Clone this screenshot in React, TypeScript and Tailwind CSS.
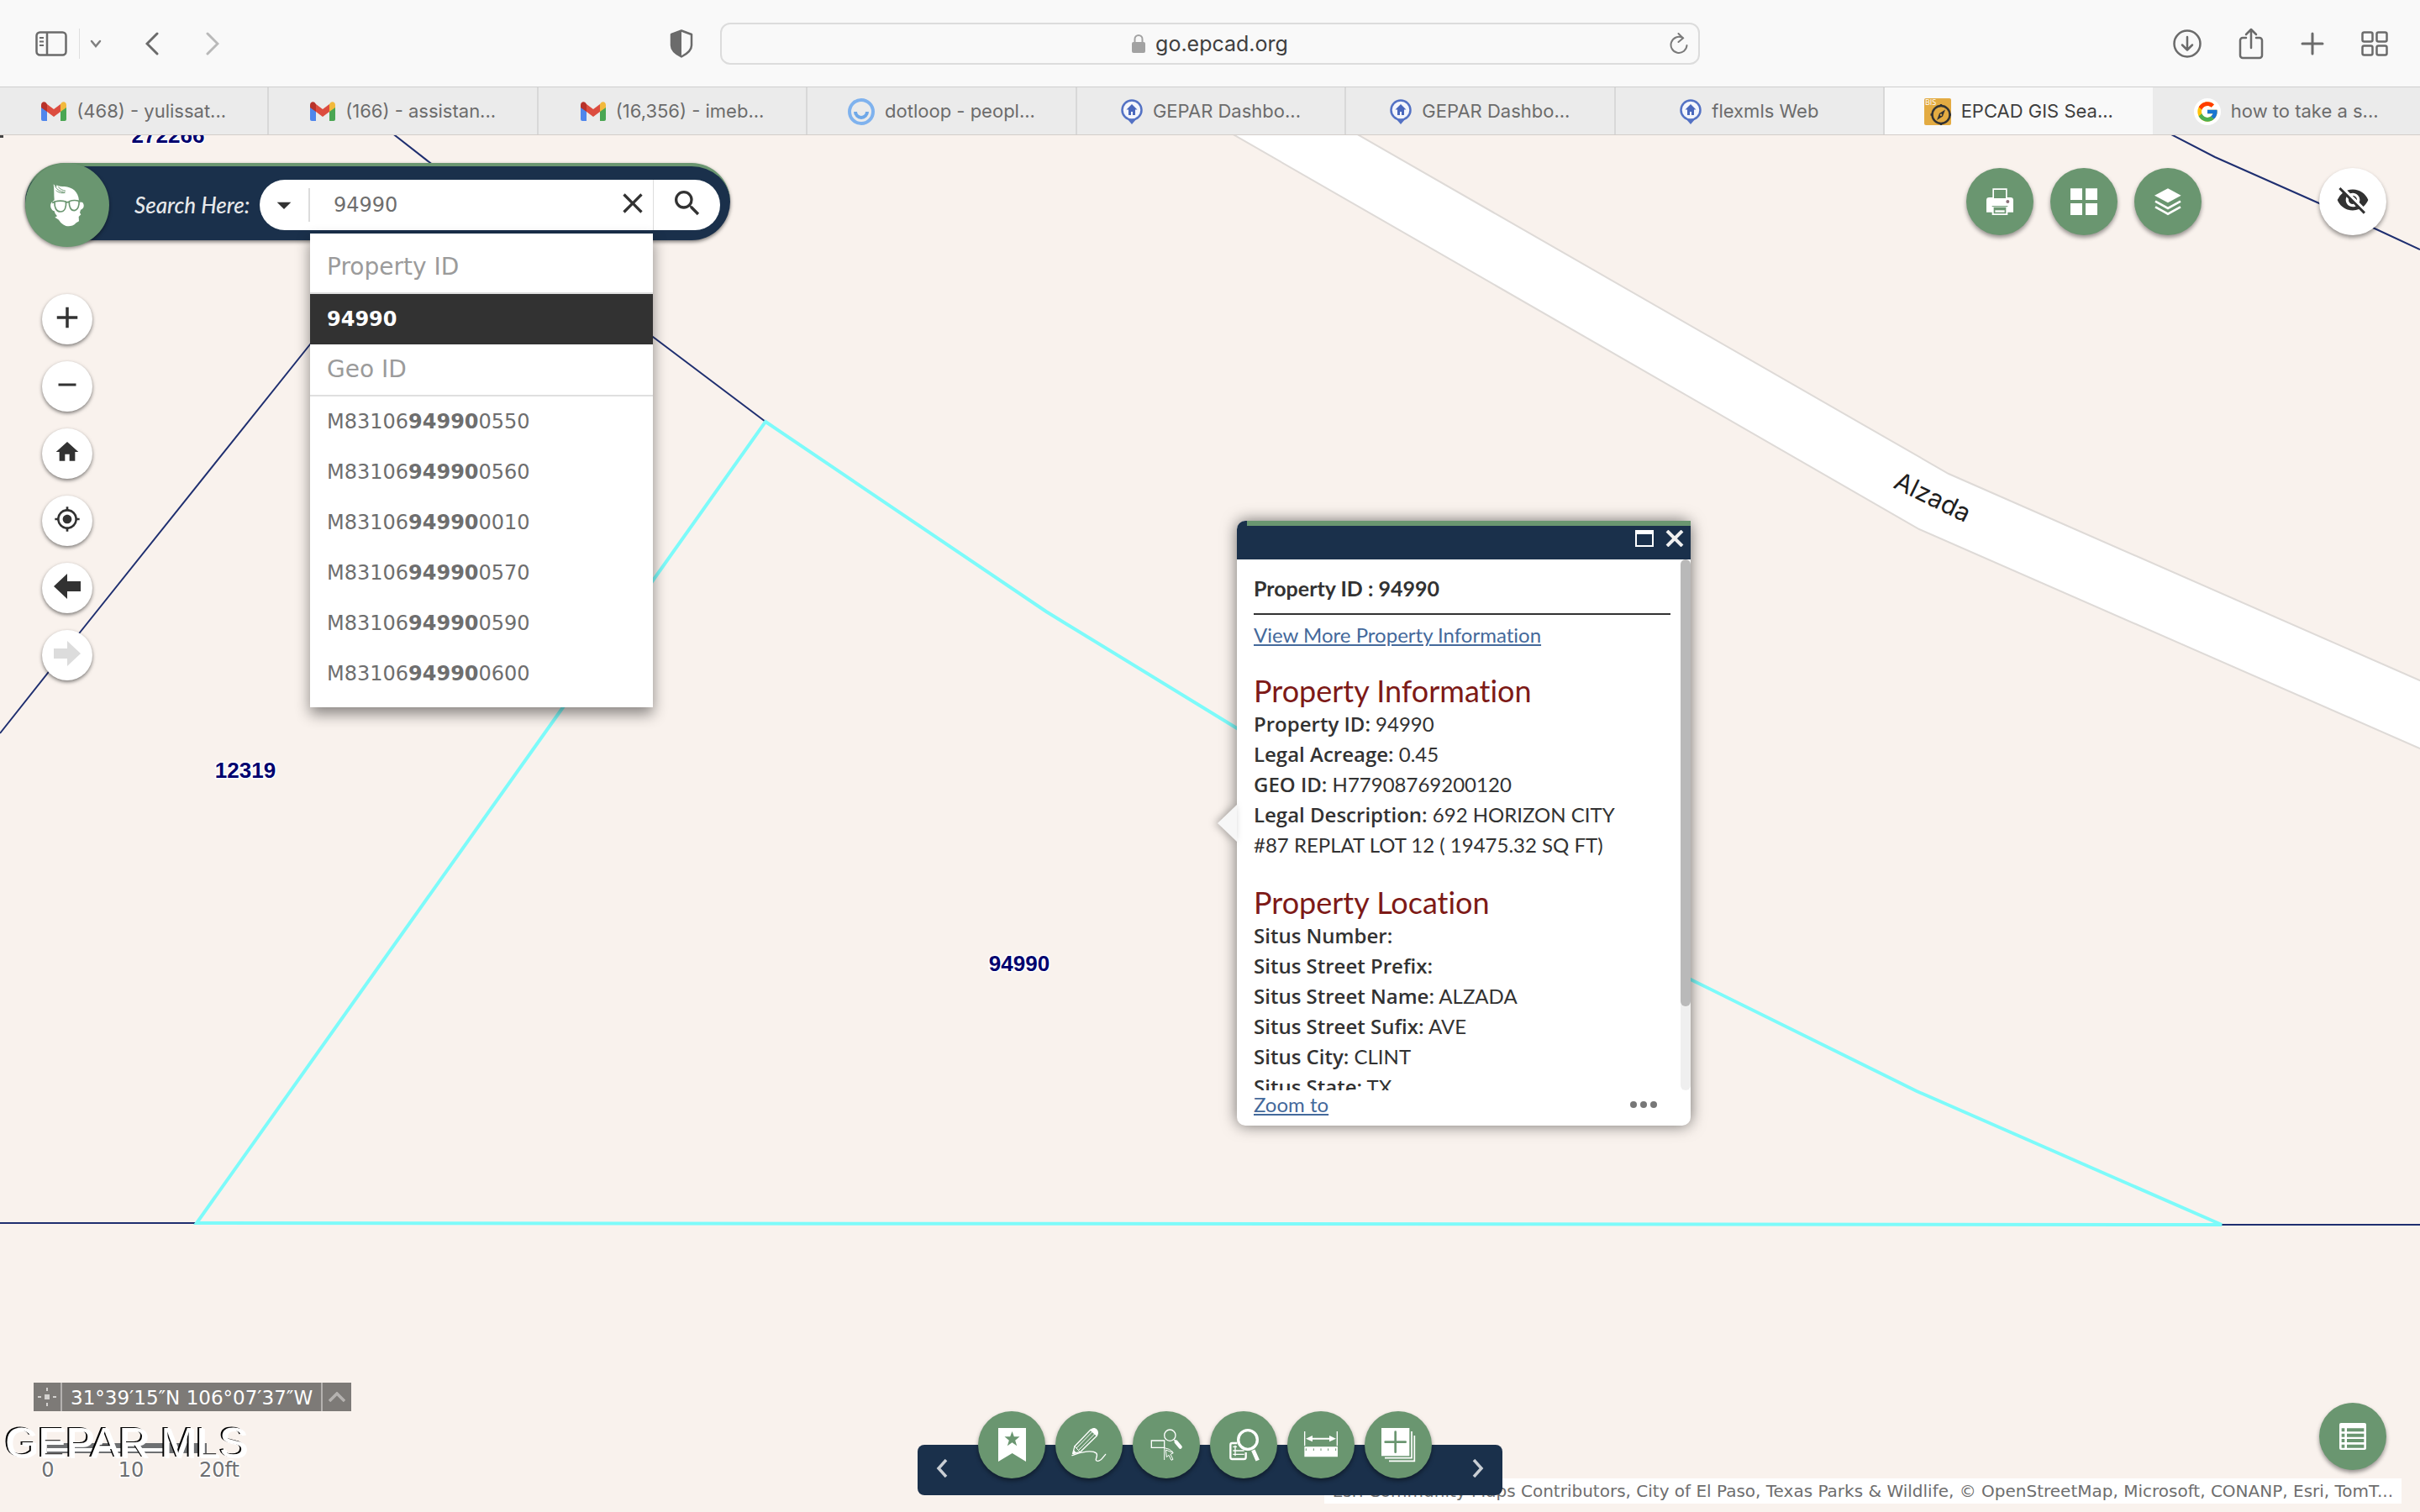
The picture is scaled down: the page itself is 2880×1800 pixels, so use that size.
import { useState, type ReactNode } from "react";
import { FcGoogle } from "react-icons/fc";
import {
  MdAdd,
  MdArrowDropDown,
  MdClose,
  MdHome,
  MdMyLocation,
  MdRemove,
  MdSearch,
  MdVisibilityOff,
} from "react-icons/md";

const geoIds = ["0550", "0560", "0010", "0570", "0590", "0600"];

const propertyInfo = [
  ["Property ID", "94990"],
  ["Legal Acreage", "0.45"],
  ["GEO ID", "H77908769200120"],
  ["Legal Description", "692 HORIZON CITY #87 REPLAT LOT 12 ( 19475.32 SQ FT)"],
];

const propertyLocation = [
  ["Situs Number", ""],
  ["Situs Street Prefix", ""],
  ["Situs Street Name", "ALZADA"],
  ["Situs Street Sufix", "AVE"],
  ["Situs City", "CLINT"],
  ["Situs State", "TX"],
];

/* ---------- Favicons ---------- */

function GmailIcon() {
  return (
    <svg viewBox="0 0 30 24" className="h-6 w-[30px]">
      <path d="M0 4v17a2 2 0 0 0 2 2h5V10z" fill="#4f86ec" />
      <path d="M30 4v17a2 2 0 0 1-2 2h-5V10z" fill="#4aa653" />
      <path d="M23 3v9l7-5V4c0-3-3-5-5.500-3z" fill="#f2b93c" />
      <path d="M7 3v9L0 7V4c0-3 3-5 5.500-3z" fill="#b8322a" />
      <path d="M7 3l8 6 8-6v9l-8 6-8-6z" fill="#dc4c3f" />
    </svg>
  );
}

function DotloopIcon() {
  return (
    <svg viewBox="0 0 32 32" className="size-8" fill="none" stroke="#7fb2ee">
      <circle cx="16" cy="16" r="14" strokeWidth="4" />
      <path d="M9 16a7 7 0 0 0 14 0" strokeWidth="4" stroke="#6fa8e8" />
    </svg>
  );
}

function PinIcon() {
  return (
    <svg viewBox="0 0 26 30" className="h-[30px] w-[26px]">
      <path d="M7 23h12l-6 7z" fill="#5472c4" />
      <circle cx="13" cy="13" r="11.500" fill="#f4f6fc" stroke="#5472c4" strokeWidth="2.500" />
      <path d="M13 6l-6.500 6.500H9V19h3v-4h2v4h3v-6.500h2.500z" fill="#4a68bd" />
    </svg>
  );
}

function BisIcon() {
  return (
    <svg viewBox="0 0 32 32" className="size-8">
      <rect width="32" height="32" rx="2" fill="#e3ab42" />
      <text x="1" y="8" fontSize="9" fill="#fff" fontFamily="Open Sans, sans-serif">
        BIS
      </text>
      <circle cx="20" cy="19.500" r="10.500" fill="none" stroke="#333" strokeWidth="2.400" />
      <path d="M20 7v3M20 29v3M7.500 19.500h3M29.500 19.500h2.500" stroke="#333" strokeWidth="2.400" />
      <path d="M25 13.500l-3 8-7 4.500 3-8z" fill="#333" />
      <circle cx="20" cy="19.800" r="1.200" fill="#e3ab42" />
    </svg>
  );
}

const tabs: { title: string; icon: ReactNode; active?: boolean }[] = [
  { title: "(468) - yulissat...", icon: <GmailIcon /> },
  { title: "(166) - assistan...", icon: <GmailIcon /> },
  { title: "(16,356) - imeb...", icon: <GmailIcon /> },
  { title: "dotloop - peopl...", icon: <DotloopIcon /> },
  { title: "GEPAR Dashbo...", icon: <PinIcon /> },
  { title: "GEPAR Dashbo...", icon: <PinIcon /> },
  { title: "flexmls Web", icon: <PinIcon /> },
  { title: "EPCAD GIS Sea...", icon: <BisIcon />, active: true },
  {
    title: "how to take a s...",
    icon: (
      <span className="flex size-8 items-center justify-center rounded-full bg-white">
        <FcGoogle size={28} />
      </span>
    ),
  },
];

/* ---------- Browser chrome ---------- */

function BrowserBar() {
  return (
    <div className="grid h-[104px] grid-cols-[1fr_minmax(0,1166px)_1fr] items-center border-b border-[#cfcfcf] bg-[#f9f9f9] text-[#6b6b6b]">
      <div className="flex items-center pr-8 pl-[42px]">
        <button aria-label="Show sidebar">
          <svg viewBox="0 0 38 30" className="h-[30px] w-[38px]" fill="none" stroke="currentColor" strokeWidth="2.500">
            <rect x="1.500" y="1.500" width="35" height="27" rx="4" />
            <path d="M14 2v26" />
            <path d="M5 8h5M5 12.500h5M5 17h5" strokeWidth="2" />
          </svg>
        </button>
        <span className="ml-[14px] h-9 w-px bg-[#dedede]" />
        <button aria-label="Sidebar options" className="ml-3">
          <svg viewBox="0 0 14 10" className="h-[10px] w-[14px]" fill="none" stroke="#808080" strokeWidth="2.500" strokeLinecap="round">
            <path d="M2 2l5 6 5-6" />
          </svg>
        </button>
        <button aria-label="Back" className="ml-[52px]">
          <svg viewBox="0 0 16 28" className="h-7 w-4" fill="none" stroke="currentColor" strokeWidth="3" strokeLinecap="round">
            <path d="M14 2L2 14l12 12" />
          </svg>
        </button>
        <button aria-label="Forward" className="ml-14">
          <svg viewBox="0 0 16 28" className="h-7 w-4" fill="none" stroke="#b9b9b9" strokeWidth="3" strokeLinecap="round">
            <path d="M2 2l12 12L2 26" />
          </svg>
        </button>
        <button aria-label="Privacy report" className="ml-auto">
          <svg viewBox="0 0 28 34" className="h-[34px] w-7">
            <path
              d="M14 1.500L26 6v13c0 6-5 10-12 13.500C7 29 2 25 2 19V6z"
              fill="none"
              stroke="currentColor"
              strokeWidth="2.500"
              strokeLinejoin="round"
            />
            <path d="M14 1.500V32C7 29 2 25 2 19V6z" fill="currentColor" />
          </svg>
        </button>
      </div>

      <div className="relative flex h-[50px] items-center justify-center gap-3 rounded-xl border-2 border-[#dcdcdc]">
        <svg viewBox="0 0 16 24" className="h-6 w-4" aria-hidden="true">
          <rect y="10" width="16" height="13" rx="2" fill="#a2a2a2" />
          <path d="M3.500 11V6.500a4.500 4.500 0 0 1 9 0V11" fill="none" stroke="#a2a2a2" strokeWidth="2" />
        </svg>
        <input
          aria-label="Address"
          defaultValue="go.epcad.org"
          className="field-sizing-content bg-transparent text-[25px] leading-8 text-[#3f3f3f] outline-none"
        />
        <button aria-label="Reload" className="absolute right-3">
          <svg viewBox="0 0 22 26" className="h-[26px] w-[22px]" fill="none" stroke="#7a7a7a" strokeWidth="2" strokeLinecap="round">
            <path d="M15.500 6A9.500 9.500 0 1 0 20.500 15" />
            <path d="M10.500 1l5.500 5.500-5.500 4.500" />
          </svg>
        </button>
      </div>

      <div className="flex items-center justify-end gap-11 pr-[38px]">
        <button aria-label="Downloads">
          <svg viewBox="0 0 34 34" className="size-[34px]" fill="none" stroke="currentColor" strokeWidth="2.500" strokeLinecap="round" strokeLinejoin="round">
            <circle cx="17" cy="17" r="15.500" />
            <path d="M17 9v15M11 18.500l6 6 6-6" />
          </svg>
        </button>
        <button aria-label="Share">
          <svg viewBox="0 0 30 38" className="h-[38px] w-[30px]" fill="none" stroke="currentColor" strokeWidth="2.500" strokeLinecap="round" strokeLinejoin="round">
            <path d="M9 12H5a3 3 0 0 0-3 3v18a3 3 0 0 0 3 3h20a3 3 0 0 0 3-3V15a3 3 0 0 0-3-3h-4" />
            <path d="M15 24V2M9 8l6-6 6 6" />
          </svg>
        </button>
        <button aria-label="New tab">
          <svg viewBox="0 0 28 28" className="size-7" fill="none" stroke="currentColor" strokeWidth="3" strokeLinecap="round">
            <path d="M14 2v24M2 14h24" />
          </svg>
        </button>
        <button aria-label="Tab overview">
          <svg viewBox="0 0 32 30" className="h-[30px] w-8" fill="none" stroke="currentColor" strokeWidth="2.500">
            <rect x="1.500" y="1.500" width="12" height="11" rx="2" />
            <rect x="18.500" y="1.500" width="12" height="11" rx="2" />
            <rect x="1.500" y="17.500" width="12" height="11" rx="2" />
            <rect x="18.500" y="17.500" width="12" height="11" rx="2" />
          </svg>
        </button>
      </div>
    </div>
  );
}

function TabStrip() {
  return (
    <nav className="flex h-[57px] border-b border-[#d3cdc9]">
      {tabs.map((tab, i) => (
        <a
          key={i}
          href="#"
          className={`flex min-w-0 flex-1 items-center justify-center gap-3 pt-px text-[22px] whitespace-nowrap ${
            tab.active ? "bg-[#f9f9f9] text-[#3f3f3f]" : "border-r-2 border-[#d8d8d8] bg-[#ebebeb] text-[#6c6c6c] last:border-r-0"
          }`}
        >
          {tab.icon}
          {tab.title}
        </a>
      ))}
    </nav>
  );
}

/* ---------- Map ---------- */

function ParcelMap() {
  return (
    <svg
      viewBox="0 161 2880 1639"
      preserveAspectRatio="xMidYMid slice"
      className="absolute inset-0 h-full w-full bg-[#f9f2ed]"
      fill="none"
    >
      <path
        d="M1464 158L2284 630L2882 892V811L2319 564L1612 158Z"
        fill="#fff"
        stroke="#dedad7"
        strokeWidth="2"
      />
      <g stroke="#1f2f70" strokeWidth="2">
        <path d="M466 158L777 401L911 502" />
        <path d="M0 873L95 753L369 410L400 371" />
        <path d="M2580 158L2636 187L2760 242L2826 272L2880 297" />
        <path d="M0 1456H234M2644 1458H2880" />
      </g>
      <path
        d="M911 502L1245 728L1472 867L1640 965L2012 1166L2281 1299L2644 1458L234 1456L670 842Z"
        stroke="#7dfbfa"
        strokeWidth="4"
      />
      <rect x="0" y="160" width="4" height="4" fill="#444" />
      <g
        className="font-['Liberation_Sans',sans-serif] text-[26px] font-bold"
        fill="#00006e"
        stroke="#fff"
        strokeWidth="3"
        paintOrder="stroke"
        textAnchor="middle"
      >
        <text x="200" y="170">272266</text>
        <text x="292" y="926">12319</text>
        <text x="1213" y="1156">94990</text>
      </g>
      <text
        x="2252"
        y="580"
        transform="rotate(26 2252 580)"
        className="font-['Inter',sans-serif] text-[30px]"
        fill="#1f1f1f"
      >
        Alzada
      </text>
    </svg>
  );
}

/* ---------- Map controls ---------- */

function RoundButton({ label, tone = "green", children }: { label: string; tone?: "green" | "white"; children: ReactNode }) {
  return (
    <button
      aria-label={label}
      className={`flex size-20 shrink-0 items-center justify-center rounded-full shadow-[0_3px_5px_rgba(0,0,0,0.4)] ${
        tone === "green" ? "bg-[#6a9670] text-white" : "bg-white pb-1 text-[#323232]"
      }`}
    >
      {children}
    </button>
  );
}

function Glyph({ children }: { children: ReactNode }) {
  return (
    <svg viewBox="0 0 240 240" className="size-20" fill="currentColor">
      {children}
    </svg>
  );
}

function BeardLogo() {
  return (
    <svg viewBox="0 0 300 300" className="size-[100px]">
      <path
        d="M104 132C102 112 104 96 101 76L112 86L112 79C118 84 130 84 140 84C168 86 190 102 192 134L200 138C213 143 212 165 198 167L195 178L199 184L191 192L192 208L182 214C174 224 164 226 155 226C142 226 130 218 122 206L118 202L106 194L114 190L107 181L104 172C90 168 85 145 98 138Z"
        fill="#fff"
      />
      <path d="M106 82C114 98 128 102 142 106C130 110 116 104 110 98M118 86C126 94 134 98 144 100" fill="none" stroke="#6a9670" strokeWidth="3" />
      <path
        d="M105 138C118 135 134 135 145 138C148 156 142 174 126 174C110 174 104 158 105 138ZM157 137C168 133 182 133 192 136C194 152 188 168 175 170C162 170 156 154 157 137ZM145 142Q151 138 157 141M105 140L96 142M192 138L203 138"
        fill="none"
        stroke="#6a9670"
        strokeWidth="5"
      />
    </svg>
  );
}

function SearchBar() {
  const [query, setQuery] = useState("94990");

  return (
    <form
      className="absolute top-[33px] left-[30px] flex h-[92px] w-[839px] items-center rounded-full border-t-4 border-[#6a9670] bg-[#1a304b] pt-1 shadow-[0_2px_4px_rgba(0,0,0,0.5)]"
      onSubmit={(e) => e.preventDefault()}
    >
      <div className="-mt-2 size-[100px] shrink-0 self-start rounded-full bg-[#6a9670] shadow-[0_2px_4px_rgba(0,0,0,0.4)]">
        <BeardLogo />
      </div>
      <label htmlFor="search" className="ml-[30px] w-[149px] font-['Lato',sans-serif] text-[26px] font-medium whitespace-nowrap text-[#e6e8ea] italic">
        Search Here:
      </label>
      <div className="mr-3 flex h-[60px] flex-1 items-center rounded-full bg-white text-[#323232]">
        <button type="button" aria-label="Search sources" className="flex w-[58px] justify-center">
          <MdArrowDropDown size={40} />
        </button>
        <input
          id="search"
          value={query}
          onChange={(e) => setQuery(e.target.value)}
          className="h-10 w-0 flex-1 border-l-2 border-[#dcdcdc] pl-7 font-['DejaVu_Sans',sans-serif] text-[24px] text-[#6e6e6e] outline-none"
        />
        <button type="button" aria-label="Clear search" className="px-1 pb-1" onClick={() => setQuery("")}>
          <MdClose size={40} />
        </button>
        <button type="submit" aria-label="Search" className="flex h-full w-20 items-center justify-center border-l border-[#dcdcdc] pb-1">
          <MdSearch size={40} />
        </button>
      </div>

      <div className="absolute top-20 left-[339px] w-[408px] bg-white py-[10px] font-['DejaVu_Sans',sans-serif] text-[24px] text-[#6e6e6e] shadow-[0_8px_16px_rgba(0,0,0,0.45)]">
        <h3 className="border-b-2 border-[#dfdfdf] px-5 text-[28px] leading-[60px] text-[#9b9b9b]">Property ID</h3>
        <button type="button" className="block w-full bg-[#323232] px-5 text-left leading-[60px] font-bold text-white">
          94990
        </button>
        <h3 className="border-b-2 border-[#dfdfdf] px-5 text-[28px] leading-[60px] text-[#9b9b9b]">Geo ID</h3>
        {geoIds.map((suffix) => (
          <button key={suffix} type="button" className="block w-full px-5 text-left leading-[60px]">
            M83106<strong>94990</strong>
            {suffix}
          </button>
        ))}
      </div>
    </form>
  );
}

const navButtons = [
  { label: "Zoom in", icon: <MdAdd size={42} /> },
  { label: "Zoom out", icon: <MdRemove size={36} /> },
  { label: "Default extent", icon: <MdHome size={32} /> },
  { label: "My location", icon: <MdMyLocation size={32} /> },
  {
    label: "Previous extent",
    icon: (
      <svg viewBox="0 0 32 30" className="h-[30px] w-8" fill="currentColor">
        <path d="M0 15L16 0v9h16v12H16v9z" />
      </svg>
    ),
  },
  {
    label: "Next extent",
    icon: (
      <svg viewBox="0 0 32 30" className="h-[30px] w-8" fill="#dcdcdc">
        <path d="M32 15L16 0v9H0v12h16v9z" />
      </svg>
    ),
  },
];

function NavControls() {
  return (
    <div className="absolute top-[189px] left-[50px] flex flex-col gap-5">
      {navButtons.map(({ label, icon }) => (
        <button
          key={label}
          aria-label={label}
          className="flex size-[60px] items-center justify-center rounded-full bg-white pb-1 text-[#323232] shadow-[0_2px_4px_rgba(0,0,0,0.5)]"
        >
          {icon}
        </button>
      ))}
    </div>
  );
}

function TopTools() {
  return (
    <div className="absolute top-[39px] right-10 flex gap-5">
      <RoundButton label="Print">
        <Glyph>
          <path d="M94 73h52v32h12q10 0 10 10v43h-20v10H92v-10H72v-43q0-10 10-10h12zM99 78v30h42V78zM98 140v23h44v-23z" fillRule="evenodd" />
          <path d="M103 151h34v7h-34z" />
          <circle cx="148" cy="120" r="6" fill="#8a6f78" />
          <path d="M92 137h56" stroke="#6a9670" strokeWidth="3" />
        </Glyph>
      </RoundButton>
      <RoundButton label="Basemaps">
        <Glyph>
          <path d="M72 73h42v41H72zM126 73h42v41h-42zM72 126h42v42H72zM126 126h42v42h-42z" />
        </Glyph>
      </RoundButton>
      <RoundButton label="Layers">
        <Glyph>
          <path d="M120 73l47 25-47 26-48-26z" />
          <path d="M75 119l45 25 45-25M75 139l45 25 45-25" fill="none" stroke="currentColor" strokeWidth="8" />
        </Glyph>
      </RoundButton>
      <div className="ml-[120px]">
        <RoundButton label="Hide widgets" tone="white">
          <MdVisibilityOff size={40} />
        </RoundButton>
      </div>
    </div>
  );
}

/* ---------- Popup ---------- */

function Fields({ title, rows }: { title: string; rows: string[][] }) {
  return (
    <section className="mt-7 pr-8">
      <h2 className="text-[36px] leading-[44px] text-[#7d1a17]">{title}</h2>
      {rows.map(([name, value]) => (
        <p key={name} className="leading-9">
          <b className="font-['Open_Sans',sans-serif] font-semibold">{name}:</b> {value}
        </p>
      ))}
    </section>
  );
}

function ParcelPopup() {
  return (
    <div
      role="dialog"
      aria-label="Property details"
      className="absolute top-[459px] left-[1472px] w-[540px] rounded-[10px] bg-white font-['Lato',sans-serif] text-[24px] text-[#323232] shadow-[0_0_18px_rgba(0,0,0,0.55)] [font-variant-ligatures:none]"
    >
      <svg viewBox="0 0 24 44" className="absolute top-[338px] right-full h-11 w-6 drop-shadow-[-3px_0_5px_rgba(0,0,0,0.3)]">
        <path d="M24 0v44L1 22z" fill="#f7f7f7" />
      </svg>
      <header className="flex h-[46px] items-center justify-end gap-[14px] rounded-tl-[10px] bg-[#1a304b] pr-2 pb-1">
        <span className="absolute top-0 right-0 left-3 h-[6px] bg-[#6a9670]" />
        <button aria-label="Maximize">
          <svg viewBox="0 0 22 20" className="h-5 w-[22px]">
            <path d="M0 0h22v20H0zM2 5v13h18V5z" fill="#fff" fillRule="evenodd" />
          </svg>
        </button>
        <button aria-label="Close">
          <svg viewBox="0 0 22 20" className="h-5 w-[22px]" stroke="#f0f0f0" strokeWidth="4">
            <path d="M2 1l18 18M20 1L2 19" />
          </svg>
        </button>
      </header>
      <div className="flex h-[632px]">
        <div className="flex-1 overflow-hidden pr-3 pl-5">
          <h1 className="border-b-2 border-[#323232] pt-4 pb-3 text-[25px] leading-9 font-bold">Property ID : 94990</h1>
          <a href="#" className="mt-2 block leading-8 text-[#44699b] underline">
            View More Property Information
          </a>
          <Fields title="Property Information" rows={propertyInfo} />
          <Fields title="Property Location" rows={propertyLocation} />
        </div>
        <div className="w-3 rounded-full bg-[#efefef]">
          <div className="h-[532px] rounded-full bg-[#b9b9b9]" />
        </div>
      </div>
      <footer className="flex h-[42px] items-center justify-between pr-10 pb-2 pl-5">
        <a href="#" className="leading-8 text-[#44699b] underline">
          Zoom to
        </a>
        <button aria-label="More actions" className="flex gap-1">
          <i className="size-2 rounded-full bg-[#777]" />
          <i className="size-2 rounded-full bg-[#777]" />
          <i className="size-2 rounded-full bg-[#777]" />
        </button>
      </footer>
    </div>
  );
}

/* ---------- Bottom widgets ---------- */

function CoordinateBar() {
  return (
    <div className="absolute bottom-[120px] left-10 flex h-[34px] items-stretch bg-[#7d7a77] font-['DejaVu_Sans',sans-serif] text-[23px] text-white">
      <button aria-label="Pick a coordinate" className="flex w-[34px] items-center justify-center border-r-2 border-[#b5b2b0]">
        <svg viewBox="0 0 22 22" className="size-[22px]" fill="#d3d1cf">
          <path d="M8 8h6v6H8zM10 0h2v4h-2zM10 18h2v4h-2zM0 10h4v2H0zM18 10h4v2h-4z" />
        </svg>
      </button>
      <span className="px-[10px] leading-[36px]">31°39′15″N 106°07′37″W</span>
      <button aria-label="Coordinate options" className="flex w-9 items-center justify-center border-l-2 border-[#b5b2b0]">
        <svg viewBox="0 0 20 12" className="h-3 w-5" fill="none" stroke="#b5b2b0" strokeWidth="3.500">
          <path d="M1 11l9-9 9 9" />
        </svg>
      </button>
    </div>
  );
}

function ScaleBar() {
  return (
    <>
      <svg viewBox="0 0 300 80" className="absolute bottom-[30px] left-0 h-20 w-[300px]">
        <path d="M54 28h192v12H54z" fill="#6e7072" />
        <path d="M56 34h94v4H56zM150 34h44v4h-44z" fill="#fff" />
        <g
          className="font-['DejaVu_Sans',sans-serif] text-[24px]"
          fill="#6e7072"
          stroke="#fff"
          strokeWidth="3"
          paintOrder="stroke"
          textAnchor="middle"
        >
          <text x="57" y="68">0</text>
          <text x="156" y="68">10</text>
          <text x="261" y="68">20ft</text>
        </g>
      </svg>
      <p className="absolute bottom-[54px] left-[6px] font-['Liberation_Sans',sans-serif] text-[50px] leading-[56px] whitespace-nowrap text-white [text-shadow:-2px_-1px_0_#000,2px_1px_0_#fff]">
        GEPAR MLS
      </p>
    </>
  );
}

function Attribution() {
  return (
    <p className="absolute right-[22px] bottom-[10px] bg-white px-[10px] font-['DejaVu_Sans',sans-serif] text-[20px] leading-[30px] whitespace-nowrap text-[#6e6e6e]">
      Esri Community Maps Contributors, City of El Paso, Texas Parks &amp; Wildlife, © OpenStreetMap, Microsoft, CONANP, Esri, TomT...
    </p>
  );
}

function WidgetDock() {
  return (
    <div className="absolute bottom-5 left-1/2 flex h-[60px] w-[696px] -translate-x-1/2 items-center rounded-lg bg-[#1a304b] text-[#f1f3f1]">
      <button aria-label="Previous widgets" className="flex w-[72px] pb-1 pl-[22px]">
        <svg viewBox="0 0 14 22" className="h-[22px] w-[14px]" fill="none" stroke="#c9ced4" strokeWidth="3.500">
          <path d="M12 1L3 11l9 10" />
        </svg>
      </button>
      <div className="flex gap-3 pb-[60px]">
        <RoundButton label="Bookmarks">
          <Glyph>
            <path d="M72 60h99v120l-49-30-50 30z" />
            <path d="M121.500 72l7 19h20l-16 13 6 20-17-12-17 12 6-20-16-13h20z" fill="#6a9670" />
          </Glyph>
        </RoundButton>
        <RoundButton label="Draw">
          <Glyph>
            <g fill="none" stroke="currentColor" strokeWidth="4" strokeLinejoin="round" strokeLinecap="round">
              <path d="M126 66L69 125L62 151L88 146L148 88" />
              <path d="M133 72L76 131M141 80L83 139M69 125L88 146" strokeWidth="3" />
              <path d="M60 158C95 144 132 138 146 150C156 160 134 178 152 178C164 178 170 164 179 154" />
            </g>
            <path d="M124 68C130 58 142 58 149 66C154 72 155 82 148 90z" />
            <path d="M62 153l4-14 10 11z" />
          </Glyph>
        </RoundButton>
        <RoundButton label="Select">
          <Glyph>
            <g fill="none" stroke="currentColor" strokeWidth="4">
              <path d="M67 105h46v25H67z" />
              <circle cx="133" cy="86" r="20" />
              <path d="M113 130v44M113 131q18 2 31 15" strokeWidth="3" />
              <path d="M118 138l27 11-10 5 9 18-6 3-9-18-8 7z" strokeWidth="3" />
            </g>
            <path d="M148 102l8 8" stroke="currentColor" strokeWidth="5" />
            <path d="M155 110l15 18" stroke="currentColor" strokeWidth="13" strokeLinecap="round" />
          </Glyph>
        </RoundButton>
        <RoundButton label="Query">
          <Glyph>
            <g fill="none" stroke="currentColor">
              <path d="M97 114H79q-6 0-6 6v45q0 6 6 6h42q7 0 7-7v-17" strokeWidth="7" />
              <path d="M82 127h14M82 141h40M82 154h40M90 122v38" strokeWidth="4" />
              <circle cx="135" cy="102" r="34" strokeWidth="10" />
              <path d="M154 139l16 37" strokeWidth="14" />
            </g>
          </Glyph>
        </RoundButton>
        <RoundButton label="Measurement">
          <Glyph>
            <path d="M61 127h119v36H61z" />
            <path d="M60 72h4v52h-4zM176 72h4v52h-4z" />
            <path d="M66 98l24-11v8h60v-8l24 11-24 11v-8H90v8z" />
            <path d="M67 133v8M94 133v8M120 133v8M146 133v8M173 133v8" stroke="#6a9670" strokeWidth="3" />
          </Glyph>
        </RoundButton>
        <RoundButton label="Add data">
          <Glyph>
            <path d="M60 60h100v100H60z" />
            <path d="M110 74v72M74 110h72" stroke="#6a9670" strokeWidth="8" strokeLinecap="round" />
            <path d="M72 167h96V72M87 178h91V87" fill="none" stroke="currentColor" strokeWidth="5" />
          </Glyph>
        </RoundButton>
      </div>
      <button aria-label="Next widgets" className="ml-auto flex pr-[22px] pb-1">
        <svg viewBox="0 0 14 22" className="h-[22px] w-[14px]" fill="none" stroke="#c9ced4" strokeWidth="3.500">
          <path d="M2 1l9 10-9 10" />
        </svg>
      </button>
    </div>
  );
}

export default function App() {
  return (
    <div className="flex min-h-screen flex-col overflow-hidden font-['Inter',sans-serif]">
      <header>
        <BrowserBar />
        <TabStrip />
      </header>
      <main className="relative flex-1 overflow-hidden">
        <ParcelMap />
        <NavControls />
        <SearchBar />
        <TopTools />
        <ParcelPopup />
        <CoordinateBar />
        <ScaleBar />
        <Attribution />
        <WidgetDock />
        <div className="absolute right-10 bottom-[50px]">
          <RoundButton label="Attribute table">
            <Glyph>
              <rect x="72" y="72" width="96" height="96" rx="6" />
              <path
                d="M80 91h11v12H80zM99 91h61v12H99zM80 110h11v12H80zM99 110h61v12H99zM80 129h11v12H80zM99 129h61v12H99zM80 149h11v12H80zM99 149h61v12H99z"
                fill="#6a9670"
              />
            </Glyph>
          </RoundButton>
        </div>
      </main>
    </div>
  );
}
